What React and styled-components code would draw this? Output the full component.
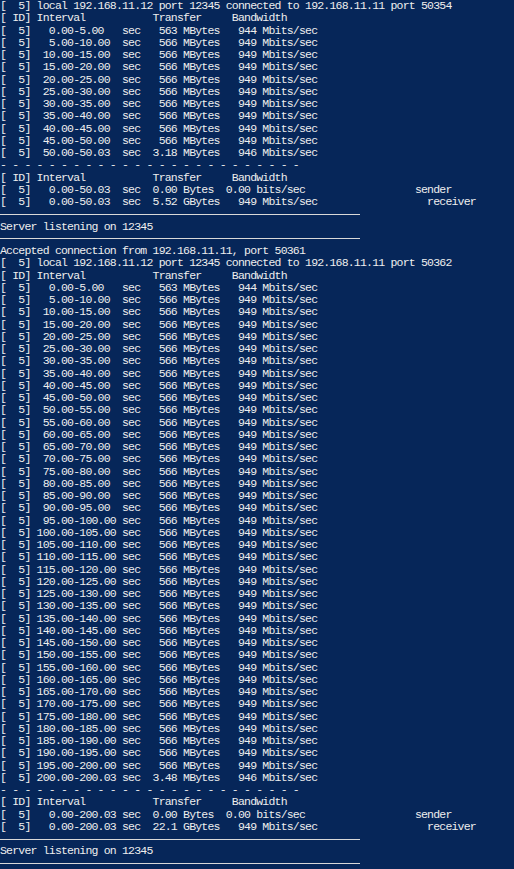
import React from 'react'
import styled, { createGlobalStyle } from 'styled-components'

const GlobalStyle = createGlobalStyle`
    html, body {
        margin: 0;
        padding: 0;
        background-color: #062659;
    }
`

const Console = styled.div`
    display: flex;
    flex-direction: column;
    width: 514px;
    min-height: 869px;
    box-sizing: border-box;
    background-color: #062659;
    color: #eeeeee;
    font-family: "Liberation Mono", "DejaVu Sans Mono", monospace;
    font-size: 11.5px;
    letter-spacing: -0.8px;
    overflow: hidden;
`

const Line = styled.div`
    height: 12.26px;
    line-height: 12.26px;
    white-space: pre;
`

const Rule = styled.div`
    display: flex;
    align-items: center;
    height: 12.26px;
    &::before {
        content: '';
        display: block;
        width: 360px;
        border-top: 1px solid #d8d8d8;
    }
`

const pad = (s, n) => s.padStart(n, ' ')
const padR = (s, n) => s.padEnd(n, ' ')

const row = (from, to, transfer, bw) =>
    `[  5] ${pad(from.toFixed(2), 6)}-${padR(to.toFixed(2), 6)} sec  ${pad(transfer, 4)} MBytes  ${pad(bw, 4)} Mbits/sec`

function intervals(end, lastTransfer) {
    const out = []
    for (let t = 0; t < Math.floor(end); t += 5) {
        const first = t === 0
        out.push(row(t, t + 5, first ? '563' : '566', first ? '944' : '949'))
    }
    out.push(row(Math.floor(end), end, lastTransfer, '946'))
    return out
}

const header = '[ ID] Interval           Transfer     Bandwidth'
const dashed = '- - - - - - - - - - - - - - - - - - - - - - - - -'

function summary(range, bytes) {
    const sender = `[  5]   ${range} sec  0.00 Bytes  0.00 bits/sec`
    const receiver = `[  5]   ${range} sec  ${bytes}   949 Mbits/sec`
    return [padR(sender, 68) + 'sender', padR(receiver, 70) + 'receiver']
}

const lines = [
    '[  5] local 192.168.11.12 port 12345 connected to 192.168.11.11 port 50354',
    header,
    ...intervals(50.03, '3.18'),
    dashed,
    header,
    ...summary('0.00-50.03 ', '5.52 GBytes'),
    null,
    'Server listening on 12345',
    null,
    'Accepted connection from 192.168.11.11, port 50361',
    '[  5] local 192.168.11.12 port 12345 connected to 192.168.11.11 port 50362',
    header,
    ...intervals(200.03, '3.48'),
    dashed,
    header,
    ...summary('0.00-200.03', '22.1 GBytes'),
    null,
    'Server listening on 12345',
    null,
]

function App() {
    return (
        <>
            <GlobalStyle />
            <Console>
                {lines.map((text, i) => (
                    text === null ? <Rule key={i} /> : <Line key={i}>{text}</Line>
                ))}
            </Console>
        </>
    )
}

export default App
